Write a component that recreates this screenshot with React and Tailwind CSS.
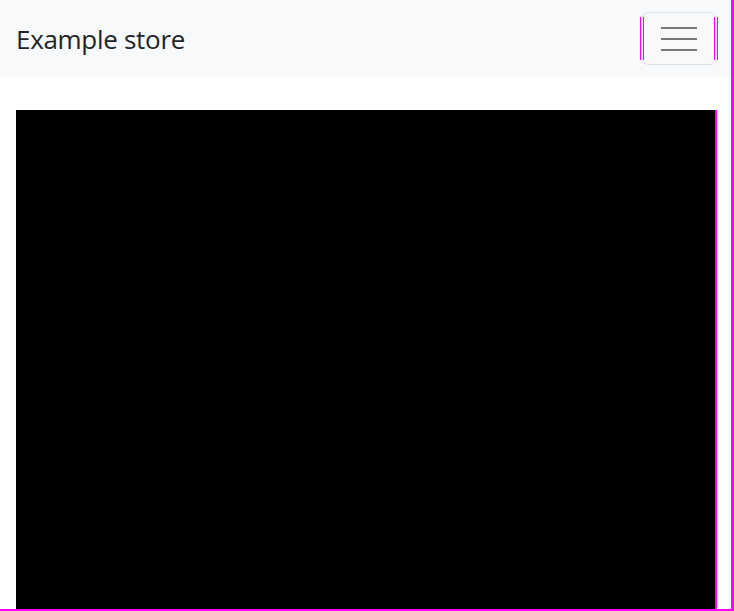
import React from 'react';

const MenuButton = () => (
  <button
    type="button"
    className="relative flex h-[53px] w-[76px] items-center justify-center rounded-lg border border-[#dee2e6] bg-transparent"
  >
    {/* debug guides seen in the capture */}
    <span className="absolute -left-[2px] top-[4px] bottom-[4px] w-[4px] border-x border-[#ff00ff]" />
    <span className="absolute -right-[2px] top-[4px] bottom-[4px] w-[4px] border-x border-[#ff00ff]" />
    <span className="flex flex-col gap-[9px]">
      <span className="block h-[2px] w-[36px] bg-[#777777]" />
      <span className="block h-[2px] w-[36px] bg-[#777777]" />
      <span className="block h-[2px] w-[36px] bg-[#777777]" />
    </span>
  </button>
);

const App = () => {
  return (
    <div
      className="h-[611px] w-[734px] overflow-hidden border-r-[3px] border-b-2 border-[#ff00ff] bg-white"
      style={{ fontFamily: '"Open Sans", "Noto Sans", sans-serif' }}
    >
      <div className="w-[731px]">
        <nav className="flex h-[77px] items-center justify-between bg-[#f8f9fa] pl-[16px] pr-[14px]">
          <span className="text-[26px] leading-none tracking-[-0.3px] text-[#212529]">Example store</span>
          <MenuButton />
        </nav>
        <main className="pl-4 pt-[33px]">
          <div className="h-[500px] w-[701px] border-r-2 border-[#ff00ff] bg-black" />
        </main>
      </div>
    </div>
  );
};

export default App;
